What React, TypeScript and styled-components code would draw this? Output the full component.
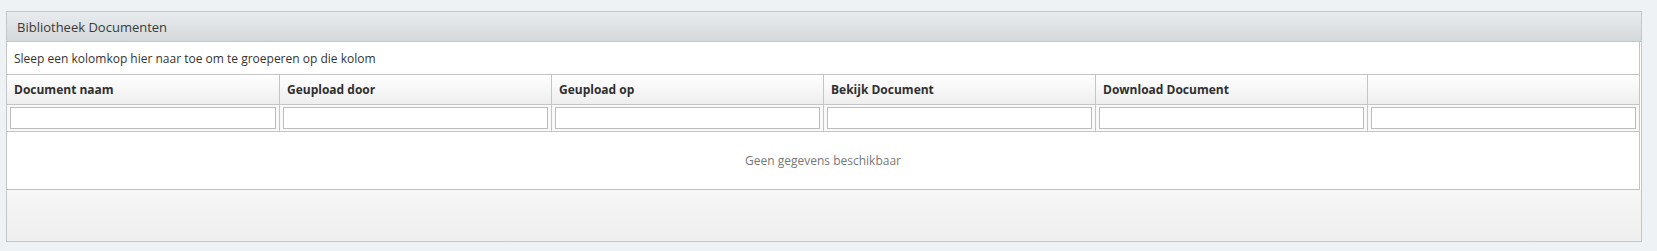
import React from 'react';
import styled, { createGlobalStyle } from 'styled-components';

const GlobalStyle = createGlobalStyle`
  html, body {
    margin: 0;
    padding: 0;
    background: #eef2f5;
    font-family: 'Open Sans', 'DejaVu Sans', sans-serif;
    color: #333;
  }
`;

const Page = styled.div`
  padding: 11px 15px 9px 6px;
`;

const Panel = styled.div`
  border: 1px solid #c3c7c9;
  background: #fff;
`;

const PanelHeader = styled.div`
  height: 29px;
  display: flex;
  align-items: center;
  padding-left: 10px;
  font-size: 13px;
  color: #3a3a3a;
  background: linear-gradient(to bottom, #e9ecee, #d3d8db);
  border-bottom: 1px solid #c2c6c8;
`;

const Grid = styled.div`
  margin-right: 1px;
  border-right: 1px solid #c5c5c5;
`;

const GroupBar = styled.div`
  height: 32px;
  display: flex;
  align-items: center;
  padding-left: 7px;
  font-size: 12px;
  color: #333;
  border-bottom: 1px solid #c5c5c5;
`;

const Row = styled.div<{ $header?: boolean }>`
  display: grid;
  grid-template-columns: repeat(6, minmax(0, 1fr));
  height: ${({ $header }) => ($header ? '29px' : '26px')};
  border-bottom: 1px solid #c5c5c5;
  background: ${({ $header }) =>
    $header ? 'linear-gradient(to bottom, #ffffff, #eeeeee)' : '#f9f9f9'};
`;

const HeaderCell = styled.div`
  display: flex;
  align-items: center;
  padding-left: 7px;
  font-size: 12px;
  font-weight: bold;
  color: #2f2f2f;
  border-left: 1px solid #c5c5c5;
  &:first-child {
    border-left: none;
  }
`;

const FilterCell = styled.div`
  display: flex;
  align-items: center;
  padding: 0 3px;
  border-left: 1px solid #c5c5c5;
  &:first-child {
    border-left: none;
  }
`;

const FilterInput = styled.input`
  display: block;
  width: 100%;
  height: 22px;
  margin: 0;
  box-sizing: border-box;
  border: 1px solid #bdbdbd;
  background: #fff;
  outline: none;
  padding: 0 4px;
  font-family: inherit;
  font-size: 12px;
`;

const EmptyBody = styled.div`
  height: 57px;
  display: flex;
  align-items: center;
  justify-content: center;
  font-size: 12px;
  color: #777;
  border-bottom: 1px solid #bfbfbf;
`;

const Footer = styled.div`
  height: 51px;
  background: linear-gradient(to bottom, #f7f7f7, #eeeeee);
`;

const columns = [
  'Document naam',
  'Geupload door',
  'Geupload op',
  'Bekijk Document',
  'Download Document',
  '',
];

const App: React.FC = () => {
  return (
    <>
      <GlobalStyle />
      <Page>
        <Panel>
          <PanelHeader>Bibliotheek Documenten</PanelHeader>
          <Grid>
            <GroupBar>Sleep een kolomkop hier naar toe om te groeperen op die kolom</GroupBar>
            <Row $header>
              {columns.map((c, i) => (
                <HeaderCell key={i}>{c}</HeaderCell>
              ))}
            </Row>
            <Row>
              {columns.map((_, i) => (
                <FilterCell key={i}>
                  <FilterInput type="text" />
                </FilterCell>
              ))}
            </Row>
            <EmptyBody>Geen gegevens beschikbaar</EmptyBody>
          </Grid>
          <Footer />
        </Panel>
      </Page>
    </>
  );
};

export default App;
